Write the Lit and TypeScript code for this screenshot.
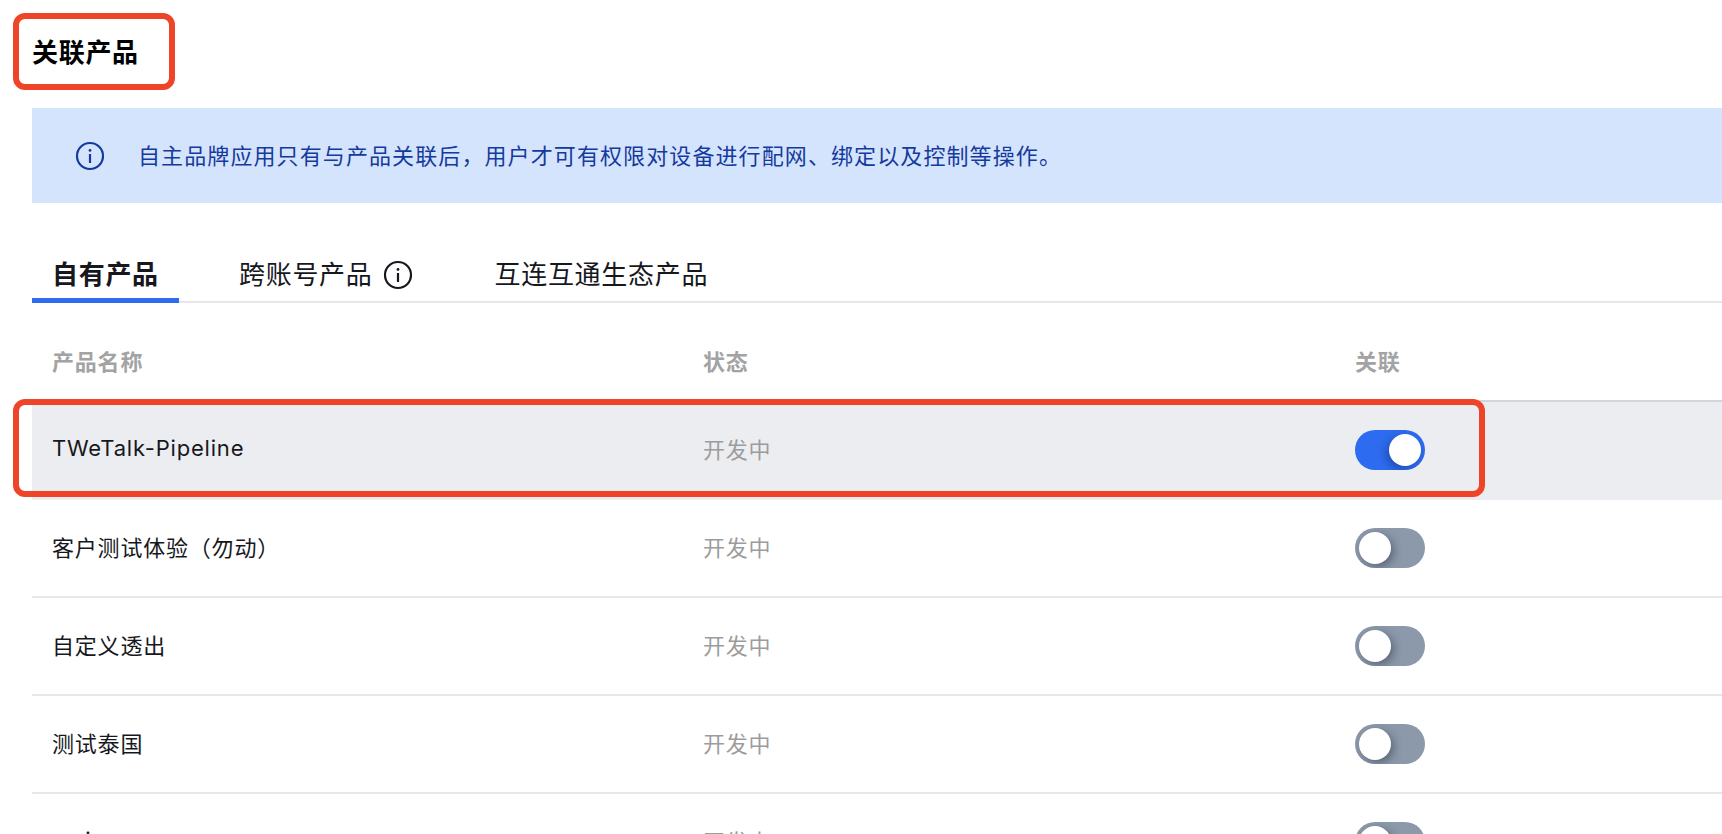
import { LitElement, html, css } from "lit";
import { customElement } from "lit/decorators.js";

const rows = [
  { name: "TWeTalk-Pipeline", on: true },
  { name: "客户测试体验（勿动）", on: false },
  { name: "自定义透出", on: false },
  { name: "测试泰国", on: false },
  { name: "ami", on: false },
];

const infoIcon = html`<svg viewBox="0 0 30 30" fill="none" stroke="currentColor">
  <circle cx="15" cy="15" r="13" stroke-width="2.2"></circle>
  <circle cx="15" cy="9.4" r="1.4" fill="currentColor" stroke="none"></circle>
  <path d="M15 13v9" stroke-width="2.2"></path>
</svg>`;

@customElement("app-root")
export class AppRoot extends LitElement {
  static styles = css`
    :host {
      display: block;
      position: relative;
      height: 834px;
      overflow: hidden;
      background: #fff;
      font-family: Inter, "Noto Sans CJK SC", sans-serif;
      color: #16181d;
    }
    .title {
      height: 108px;
      box-sizing: border-box;
      padding: 36px 0 0 32px;
      font-size: 26px;
      line-height: 34px;
      font-weight: 700;
      letter-spacing: 0.7px;
      color: #000;
    }
    .content {
      padding-left: 32px;
    }
    .banner {
      height: 95px;
      background: #d5e4fd;
      display: flex;
      align-items: center;
      padding-left: 43px;
      color: #143a9e;
      font-size: 22px;
      letter-spacing: 1.1px;
    }
    .banner svg {
      width: 30px;
      height: 30px;
      margin-right: 33px;
      flex: none;
    }
    .banner span {
      margin-bottom: 4px;
    }
    .tabs {
      display: flex;
      height: 100px;
      box-sizing: border-box;
      border-bottom: 2px solid #e6e7ec;
      align-items: flex-end;
      font-size: 26px;
    }
    .tab {
      height: 45px;
      box-sizing: border-box;
      margin-bottom: -2px;
      display: flex;
      align-items: flex-start;
      line-height: 34px;
      letter-spacing: 0.7px;
    }
    .tab.active {
      width: 147px;
      padding-left: 20px;
      font-weight: 700;
      margin-right: 60px;
      border-bottom: 5px solid #2d6cf0;
    }
    .tab.cross {
      margin-right: 82px;
    }
    .tab svg {
      width: 30px;
      height: 30px;
      margin: 2px 0 0 10px;
      color: #16181d;
    }
    .row {
      display: grid;
      grid-template-columns: 651px 652px 1fr;
      align-items: center;
      padding-left: 20px;
      font-size: 22px;
      letter-spacing: 0.8px;
    }
    .head {
      height: 97px;
      padding-top: 16px;
      box-sizing: border-box;
      font-weight: 700;
      color: #a3a3a3;
    }
    .item {
      height: 98px;
      box-sizing: border-box;
      border-bottom: 2px solid #e6e7ec;
    }
    .item span {
      margin-bottom: 4px;
    }
    .item.selected {
      height: 100px;
      background: #ecedf1;
      border-bottom: none;
      box-shadow: inset 0 2px 0 #d2d5dd;
    }
    .status {
      color: #9c9c9c;
    }
    .toggle {
      width: 70px;
      height: 40px;
      border-radius: 20px;
      background: #8c99ab;
      position: relative;
      overflow: hidden;
    }
    .toggle.on {
      background: #2d6cf0;
    }
    .knob {
      position: absolute;
      top: 4px;
      left: 4px;
      width: 32px;
      height: 32px;
      border-radius: 50%;
      background: #fff;
      box-shadow: 3px 3px 8px rgba(30, 40, 60, 0.45);
    }
    .toggle.on .knob {
      left: 34px;
      box-shadow: -3px 3px 8px rgba(20, 40, 100, 0.45);
    }
    .mark {
      position: absolute;
      box-sizing: border-box;
      border: 6px solid #ee4427;
      border-radius: 12px;
      pointer-events: none;
    }
    .mark.heading {
      left: 13px;
      top: 13px;
      width: 162px;
      height: 77px;
    }
    .mark.line {
      left: 13px;
      top: 399px;
      width: 1472px;
      height: 98px;
    }
  `;

  render() {
    return html`
      <div class="title">关联产品</div>
      <div class="content">
        <div class="banner">
          ${infoIcon}<span>自主品牌应用只有与产品关联后，用户才可有权限对设备进行配网、绑定以及控制等操作。</span>
        </div>
        <div class="tabs">
          <div class="tab active">自有产品</div>
          <div class="tab cross">跨账号产品${infoIcon}</div>
          <div class="tab">互连互通生态产品</div>
        </div>
        <div class="row head">
          <span>产品名称</span><span>状态</span><span>关联</span>
        </div>
        ${rows.map(
          (r) => html`
            <div class="row item ${r.on ? "selected" : ""}">
              <span>${r.name}</span>
              <span class="status">开发中</span>
              <div class="toggle ${r.on ? "on" : ""}"><div class="knob"></div></div>
            </div>
          `
        )}
      </div>
      <div class="mark heading"></div>
      <div class="mark line"></div>
    `;
  }
}
